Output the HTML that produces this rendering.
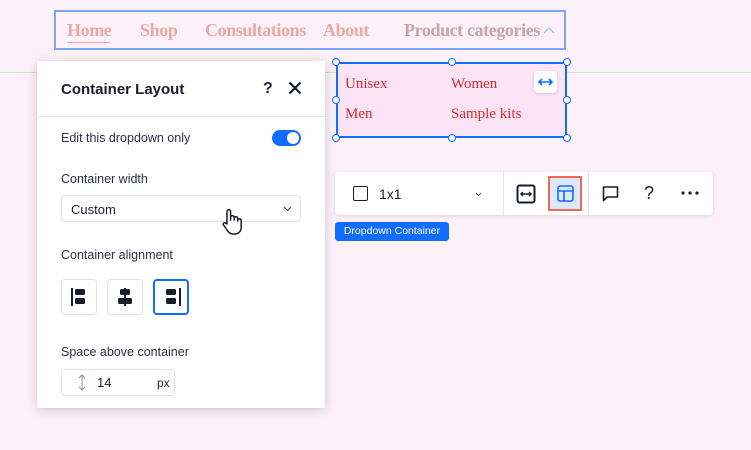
<!DOCTYPE html>
<html><head><style>
body{margin:0;width:751px;height:450px;background:#fcf0f9;position:relative;overflow:hidden;font-family:"Liberation Sans",sans-serif}
.a{position:absolute}
.nav{left:54px;top:10px;width:512px;height:40px;border:2px solid #7aa7f5;box-sizing:border-box}
.ni{position:absolute;top:10px;font-family:"Liberation Serif",serif;font-size:18px;color:#eaa9a0;font-weight:bold;letter-spacing:-0.4px}
.panel{left:37px;top:61px;width:288px;height:347px;background:#fff;box-shadow:0 2px 10px rgba(0,0,0,.18)}
.lbl{position:absolute;left:24px;font-size:12.5px;color:#2a2f45}
.btn{position:absolute;top:279px;width:36px;height:36px;border:1px solid #dfe2ea;border-radius:4px;box-sizing:border-box;background:#fff}
.h{position:absolute;width:8px;height:8px;border:1.5px solid #116dff;border-radius:50%;background:#fff;box-sizing:border-box}
.dd{font-family:'Liberation Serif',serif;font-size:15px;color:#d92a2a}
</style></head><body>
<div class="a" style="left:0;top:72px;width:751px;height:1px;background:#c8e6c0"></div>
<div class="a nav"></div>
<span class="a ni" style="left:67px;top:20px">Home</span>
<div class="a" style="left:67px;top:42px;width:43px;height:1px;background:#eaa9a0"></div>
<span class="a ni" style="left:140px;top:20px">Shop</span>
<span class="a ni" style="left:205px;top:20px">Consultations</span>
<span class="a ni" style="left:323px;top:20px">About</span>
<span class="a ni" style="left:404px;top:20px;color:#c5a6a4">Product categories</span>
<svg class="a" style="left:543px;top:27px" width="12" height="8"><path d="M1 6L6 1L11 6" stroke="#a8c4f2" stroke-width="1.5" fill="none"/></svg>

<div class="a" style="left:336px;top:62px;width:231px;height:76px;background:#fce4f6;border:2px solid #116dff;box-sizing:border-box"></div>
<span class="a dd" style="left:345px;top:76px">Unisex</span>
<span class="a dd" style="left:451px;top:76px">Women</span>
<span class="a dd" style="left:345px;top:106px">Men</span>
<span class="a dd" style="left:451px;top:106px">Sample kits</span>
<div class="a" style="left:534px;top:71px;width:23px;height:22px;background:#fff;border-radius:4px;box-shadow:0 1px 3px rgba(0,0,0,.15)"></div>
<svg class="a" style="left:537px;top:76px" width="17" height="12"><path d="M2 6H15M5 3L2 6L5 9M12 3L15 6L12 9" stroke="#116dff" stroke-width="1.6" fill="none"/></svg>
<div class="h" style="left:332px;top:58px"></div><div class="h" style="left:448px;top:58px"></div><div class="h" style="left:563px;top:58px"></div>
<div class="h" style="left:332px;top:96px"></div><div class="h" style="left:563px;top:96px"></div>
<div class="h" style="left:332px;top:134px"></div><div class="h" style="left:448px;top:134px"></div><div class="h" style="left:563px;top:134px"></div>

<div class="a panel">
<div style="position:absolute;left:24px;top:20px;font-size:15px;font-weight:bold;color:#1a1c2c">Container Layout</div>
<div style="position:absolute;left:226px;top:19px;font-size:16px;font-weight:bold;color:#1a1c2c">?</div>
<svg style="position:absolute;left:251px;top:20px" width="14" height="14"><path d="M1.5 1.5L12.5 12.5M12.5 1.5L1.5 12.5" stroke="#1a1c2c" stroke-width="2.2"/></svg>
<div style="position:absolute;left:0;top:55px;width:288px;height:1px;background:#e3e5ec"></div>
<div class="lbl" style="top:70px">Edit this dropdown only</div>
<div style="position:absolute;left:235px;top:69px;width:29px;height:16px;border-radius:8px;background:#116dff"><div style="position:absolute;right:2px;top:2px;width:12px;height:12px;border-radius:50%;background:#fff"></div></div>
<div class="lbl" style="top:111px">Container width</div>
<div style="position:absolute;left:24px;top:134px;width:240px;height:27px;border:1px solid #dfe2ea;border-radius:4px;box-sizing:border-box;font-size:13px;color:#1a1c2c;padding:6px 9px">Custom</div>
<svg style="position:absolute;left:246px;top:145px" width="9" height="6"><path d="M1 1L4.5 4.5L8 1" stroke="#333" fill="none"/></svg>
<svg style="position:absolute;left:184px;top:147px" width="22" height="28"><path d="M6 16V3.5a1.8 1.8 0 0 1 3.6 0V12V9.5a1.8 1.8 0 0 1 3.6 0V12V10.5a1.8 1.8 0 0 1 3.6 0V13V12a1.8 1.8 0 0 1 3.4 0V19c0 4-2.5 7-6.5 7h-2c-3 0-4.5-2-6-4.5L2.5 17c-1-1.6 1-3 2.3-1.8Z" fill="#fff" stroke="#1a1c2c" stroke-width="1.5" stroke-linejoin="round"/></svg>
<div class="lbl" style="top:187px">Container alignment</div>
</div>
<div class="btn" style="left:61px"></div><div class="btn" style="left:107px"></div><div class="btn" style="left:153px;border:2px solid #116dff"></div>
<svg class="a" style="left:61px;top:279px" width="140" height="36">
<rect x="10" y="9" width="2" height="18" fill="#1a1c2c"/><rect x="14" y="10" width="10" height="6" rx="1.5" fill="#1a1c2c"/><rect x="14" y="19" width="10" height="6" rx="1.5" fill="#1a1c2c"/>
<rect x="63" y="9" width="2" height="18" fill="#1a1c2c"/><rect x="59" y="10" width="10" height="6" rx="1.5" fill="#1a1c2c"/><rect x="57" y="19" width="14" height="6" rx="1.5" fill="#1a1c2c"/>
<rect x="118" y="9" width="2" height="18" fill="#1a1c2c"/><rect x="105" y="10" width="10" height="6" rx="1.5" fill="#1a1c2c"/><rect x="105" y="19" width="10" height="6" rx="1.5" fill="#1a1c2c"/>
</svg>
<div class="a lbl" style="left:61px;top:345px">Space above container</div>
<div class="a" style="left:61px;top:369px;width:114px;height:27px;border:1px solid #dfe2ea;border-radius:4px;box-sizing:border-box"></div>
<svg class="a" style="left:77px;top:374px" width="10" height="17"><path d="M5 1V16M2 4L5 1L8 4M2 13L5 16L8 13" stroke="#8a8fa8" fill="none"/></svg>
<span class="a" style="left:97px;top:375px;font-size:13px;color:#1a1c2c">14</span>
<span class="a" style="left:157px;top:376px;font-size:12px;color:#1a1c2c">px</span>

<div class="a" style="left:335px;top:172px;width:378px;height:43px;background:#fff;border-radius:4px;box-shadow:0 1px 4px rgba(0,0,0,.12)"></div>
<div class="a" style="left:353px;top:186px;width:15px;height:15px;border:1.5px solid #1a1c2c;border-radius:2px;box-sizing:border-box"></div>
<span class="a" style="left:379px;top:186px;font-size:14px;color:#1a1c2c">1x1</span>
<svg class="a" style="left:475px;top:192px" width="7" height="5"><path d="M1 1L3.5 3.5L6 1" stroke="#555" fill="none"/></svg>
<div class="a" style="left:503px;top:172px;width:1px;height:43px;background:#e3e5ec"></div>
<div class="a" style="left:588px;top:172px;width:1px;height:43px;background:#e3e5ec"></div>
<svg class="a" style="left:516px;top:184px" width="20" height="20"><rect x="1.5" y="1.5" width="17" height="17" rx="2" stroke="#1a1c2c" stroke-width="2" fill="none"/><path d="M5 10H15M7 8L5 10L7 12M13 8L15 10L13 12" stroke="#1a1c2c" stroke-width="1.5" fill="none"/></svg>
<div class="a" style="left:548px;top:176px;width:34px;height:35px;background:#dce9ff;border:2px solid #f06a52;box-sizing:border-box"></div>
<svg class="a" style="left:557px;top:185px" width="17" height="17"><rect x="1" y="1" width="15" height="15" rx="2" stroke="#116dff" stroke-width="1.6" fill="none"/><path d="M1 6H16M7 6V16" stroke="#116dff" stroke-width="1.6"/></svg>
<svg class="a" style="left:602px;top:185px" width="17" height="17"><path d="M1.5 2H15.5V12H5L1.5 15.5Z" stroke="#1a1c2c" stroke-width="1.6" fill="none" stroke-linejoin="round"/></svg>
<span class="a" style="left:644px;top:183px;font-size:18px;color:#1a1c2c">?</span>
<svg class="a" style="left:681px;top:191px" width="18" height="4"><circle cx="2" cy="2" r="1.6" fill="#1a1c2c"/><circle cx="9" cy="2" r="1.6" fill="#1a1c2c"/><circle cx="16" cy="2" r="1.6" fill="#1a1c2c"/></svg>
<div class="a" style="left:335px;top:222px;width:114px;height:19px;background:#116dff;border-radius:3px;color:#fff;font-size:10.5px;line-height:19px;text-align:center">Dropdown Container</div>
</body></html>
